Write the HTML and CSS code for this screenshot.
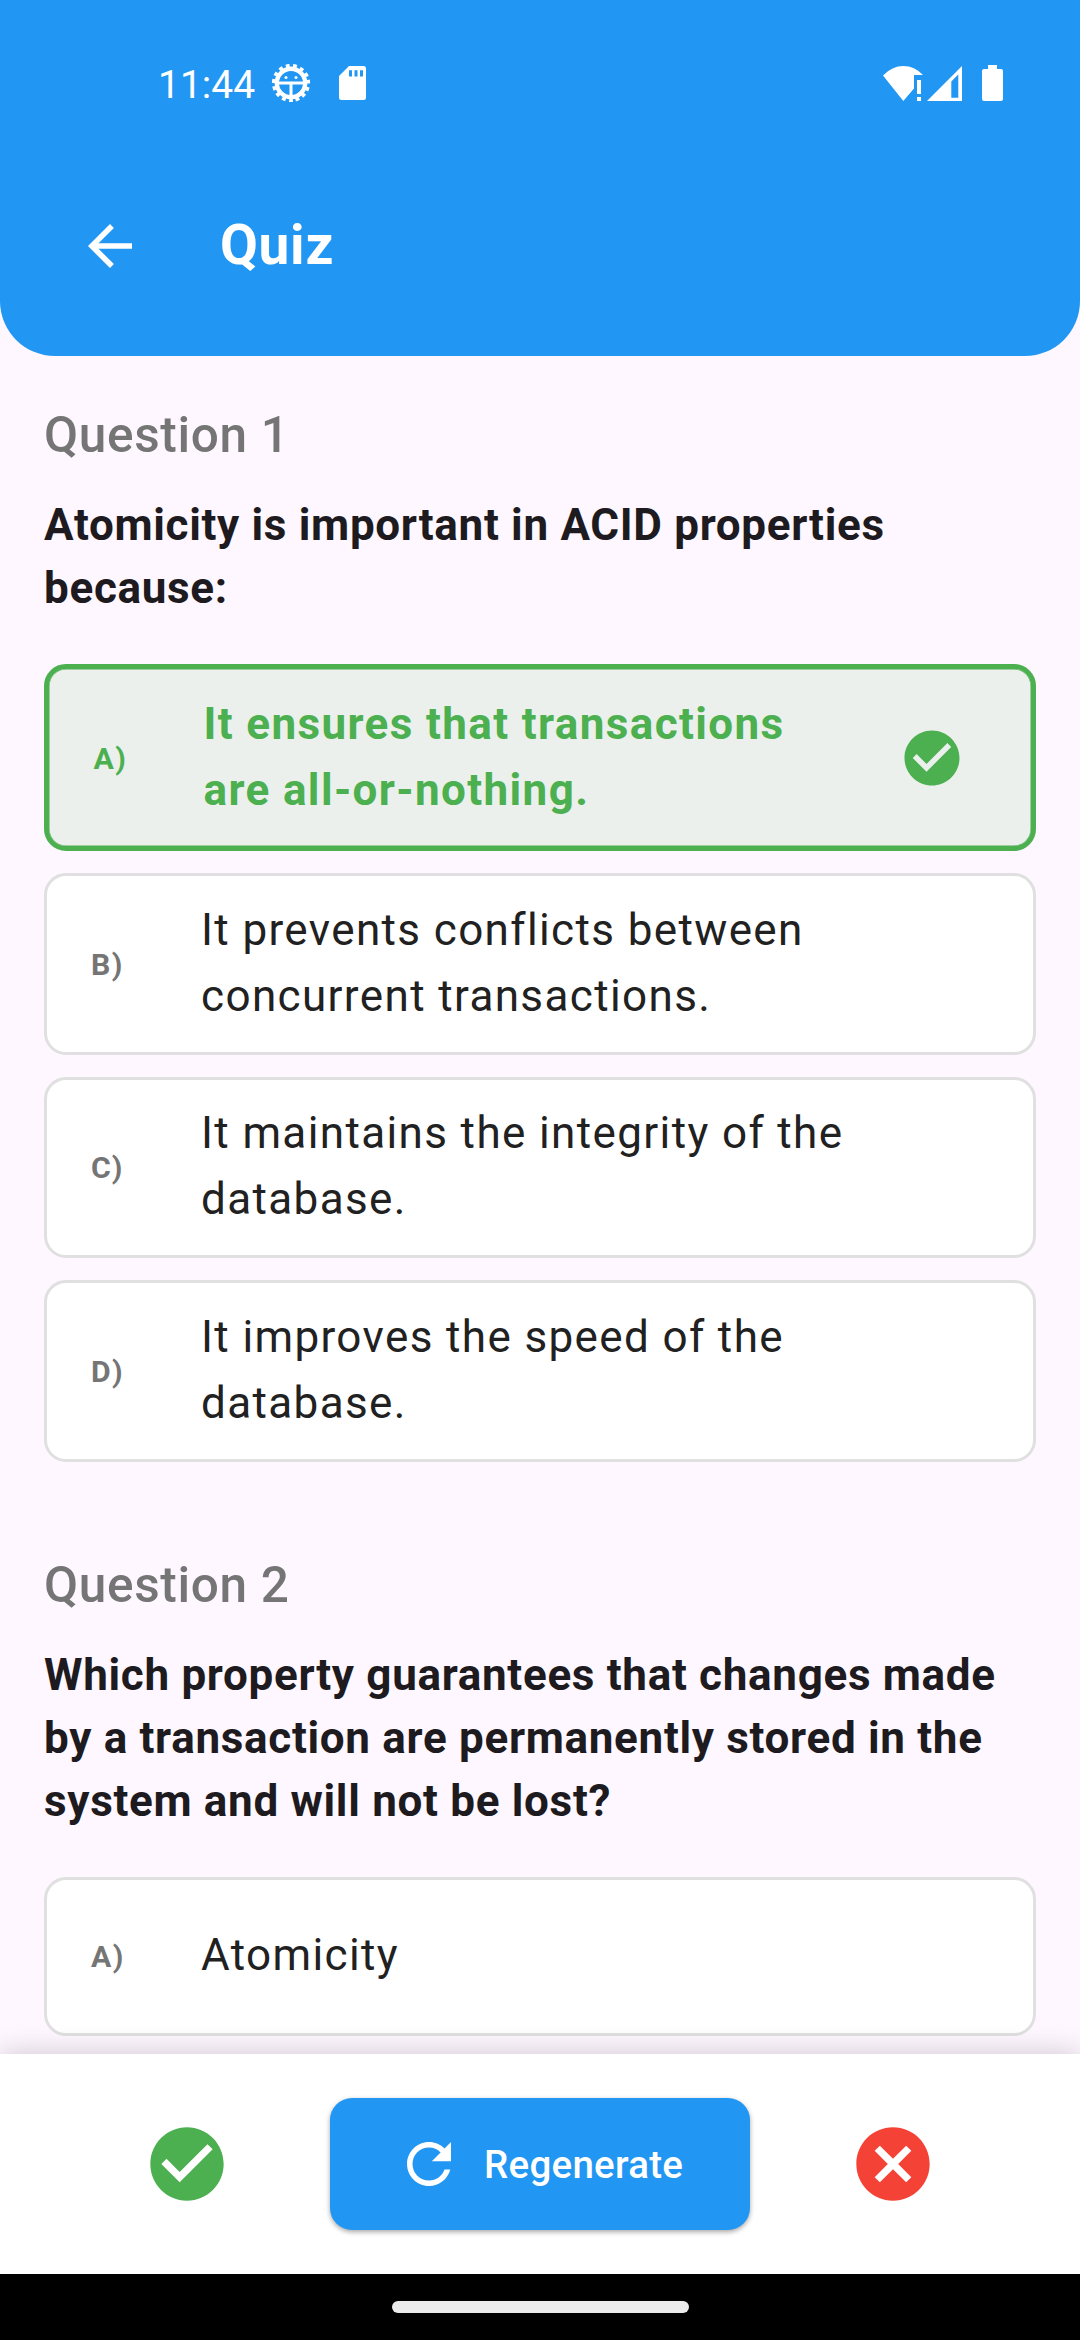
FILE: index.html
```html
<!DOCTYPE html>
<html lang="en">
<head>
<meta charset="utf-8">
<title>Quiz</title>
<link rel="stylesheet" href="styles.css">
</head>
<body>
<div class="screen">
  <header class="header">
    <div class="status">
      <span class="clock">11:44</span>
      <svg class="bug" viewBox="0 0 40 40">
        <g fill="none" stroke="#fff">
          <circle cx="20" cy="20" r="14.200" stroke-width="4.400"/>
          <circle cx="20" cy="20" r="17.200" stroke-width="3.800" stroke-dasharray="3.800 3.405" transform="rotate(83.700 20 20)"/>
          <path d="M7 20h26M20 20V33" stroke-width="3"/>
        </g>
        <circle cx="15" cy="14.500" r="1.500" fill="#fff"/><circle cx="25" cy="14.500" r="1.500" fill="#fff"/>
      </svg>
      <svg class="sd" viewBox="0 0 27 34"><path fill="#fff" fill-rule="evenodd" d="M10 0H24.500Q27 0 27 2.500V31.500Q27 34 24.500 34H2.500Q0 34 0 31.500V10ZM10 4.200V10.500H13V4.200ZM15.500 4.200V10.500H18.500V4.200ZM21 4.200V10.500H24V4.200Z"/></svg>
      <span class="spacer"></span>
      <svg class="wifi" viewBox="0 0 40 35"><path fill="#fff" d="M0 9.500Q9 0 20.300 0T40 9H31V22.500L20.300 35ZM34 14h4v14h-4ZM34 31h4v4h-4Z"/></svg>
      <svg class="signal" viewBox="0 0 35 35"><path fill="#fff" fill-rule="evenodd" d="M0 35 35 0V35ZM24.300 15.500V31.700H31.300V8.600Z"/></svg>
      <svg class="battery" viewBox="0 0 21 36"><path fill="#fff" d="M6 0h9v4h4q2 0 2 2v28q0 2-2 2H2q-2 0-2-2V6q0-2 2-2h4Z"/></svg>
    </div>
    <div class="appbar">
      <svg class="back" viewBox="0 0 24 24"><path fill="#fff" d="M20 11H7.830l5.590-5.590L12 4l-8 8 8 8 1.410-1.410L7.830 13H20v-2z"/></svg>
      <h1 class="title">Quiz</h1>
    </div>
  </header>

  <main class="content">
    <section class="question">
      <h2 class="label">Question 1</h2>
      <p class="prompt">Atomicity is important in ACID properties<br>because:</p>
      <div class="options">
        <div class="option correct">
          <span class="letter">A)</span>
          <span class="answer">It ensures that transactions<br>are all-or-nothing.</span>
          <svg class="mark" viewBox="0 0 24 24"><path fill="#4caf50" d="M12 2C6.480 2 2 6.480 2 12s4.480 10 10 10 10-4.480 10-10S17.520 2 12 2zm-2 15l-5-5 1.410-1.410L10 14.170l7.590-7.590L19 8l-9 9z"/></svg>
        </div>
        <div class="option"><span class="letter">B)</span><span class="answer">It prevents conflicts between<br>concurrent transactions.</span></div>
        <div class="option"><span class="letter">C)</span><span class="answer">It maintains the integrity of the<br>database.</span></div>
        <div class="option"><span class="letter">D)</span><span class="answer">It improves the speed of the<br>database.</span></div>
      </div>
    </section>
    <section class="question">
      <h2 class="label">Question 2</h2>
      <p class="prompt">Which property guarantees that changes made<br>by a transaction are permanently stored in the<br>system and will not be lost?</p>
      <div class="options">
        <div class="option single"><span class="letter">A)</span><span class="answer">Atomicity</span></div>
      </div>
    </section>
  </main>

  <footer class="actions">
    <svg class="action" viewBox="0 0 24 24"><path fill="#4caf50" d="M12 2C6.480 2 2 6.480 2 12s4.480 10 10 10 10-4.480 10-10S17.520 2 12 2zm-2 15l-5-5 1.410-1.410L10 14.170l7.590-7.590L19 8l-9 9z"/></svg>
    <button class="regenerate">
      <svg class="refresh" viewBox="0 0 24 24"><path fill="#fff" d="M17.650 6.350C16.200 4.900 14.210 4 12 4c-4.420 0-7.990 3.580-7.990 8s3.570 8 7.990 8c3.730 0 6.840-2.550 7.730-6h-2.080c-.82 2.330-3.040 4-5.650 4-3.310 0-6-2.690-6-6s2.690-6 6-6c1.660 0 3.140.69 4.220 1.780L13 11h7V4l-2.350 2.350z"/></svg>
      <span>Regenerate</span>
    </button>
    <svg class="action" viewBox="0 0 24 24"><path fill="#f44336" d="M12 2C6.470 2 2 6.470 2 12s4.470 10 10 10 10-4.470 10-10S17.530 2 12 2zm5 13.590L15.590 17 12 13.410 8.410 17 7 15.590 10.590 12 7 8.410 8.410 7 12 10.590 15.590 7 17 8.410 13.410 12 17 15.590z"/></svg>
  </footer>
  <div class="navbar"><div class="handle"></div></div>
</div>
</body>
</html>
```
FILE: styles.css
```css
* { box-sizing: border-box; }
body { margin: 0; font-family: Roboto, "Liberation Sans", sans-serif; }
svg { display: block; flex: none; }
.screen {
  width: 1080px;
  height: 2340px;
  display: flex;
  flex-direction: column;
  overflow: hidden;
  background: #fef7ff;
}
.header {
  flex: none;
  height: 356px;
  background: #2196f3;
  border-radius: 0 0 55px 55px;
  color: #fff;
}
.status {
  display: flex;
  align-items: center;
  height: 166px;
  padding: 0 77px 0 158px;
}
.clock { font-size: 39px; line-height: 46px; width: 113px; padding-top: 3px; white-space: nowrap; }
.bug { width: 40px; height: 40px; }
.sd { width: 27px; height: 34px; margin-left: 28px; }
.spacer { flex: 1; }
.wifi { width: 40px; height: 35px; }
.signal { width: 35px; height: 35px; margin: 0 20px 0 4px; }
.battery { width: 21px; height: 36px; }
.appbar {
  display: flex;
  align-items: center;
  height: 160px;
  padding-left: 77px;
}
.back { width: 66px; height: 66px; }
.title { margin: 0 0 0 77px; padding-bottom: 2px; font-size: 55px; line-height: 64px; font-weight: 700; letter-spacing: 0.7px; }

.content {
  flex: 1;
  min-height: 0;
  overflow: hidden;
  padding: 44px 44px 0;
  display: flex;
  flex-direction: column;
  gap: 88px;
}
.label {
  margin: 0 0 23px;
  font-size: 49.5px;
  line-height: 71px;
  font-weight: 500;
  letter-spacing: 0.6875px;
  color: #757575;
}
.prompt {
  margin: 0 0 44px;
  font-size: 44px;
  line-height: 63px;
  font-weight: 700;
  letter-spacing: 0.6875px;
  color: #1d1b20;
  white-space: nowrap;
}
.options { display: flex; flex-direction: column; gap: 22px; }
.option {
  display: flex;
  align-items: center;
  height: 181.5px;
  padding: 0 66px 0 44px;
  border: 3px solid #e0e0e0;
  border-radius: 22px;
  background: #fff;
  color: #212121;
}
.option.single { height: 159px; }
.letter {
  width: 110px;
  padding-top: 2px;
  font-size: 30.25px;
  line-height: 44px;
  font-weight: 700;
  letter-spacing: 1.375px;
  color: #757575;
}
.answer {
  flex: 1;
  padding-bottom: 2px;
  font-size: 44px;
  line-height: 66px;
  letter-spacing: 1.375px;
  white-space: nowrap;
}
.option.correct {
  height: 187px;
  padding: 0 66px 0 44.5px;
  border: 5px solid #4caf50;
  box-shadow: inset 0 0 0 0.5px #4caf50;
  background: #ebf0ec;
  color: #4caf50;
}
.correct .letter { color: #4caf50; }
.correct .answer { font-weight: 700; }
.mark { width: 66px; height: 66px; }

.actions {
  flex: none;
  height: 220px;
  display: flex;
  align-items: center;
  justify-content: space-between;
  padding: 0 143px;
  background: #fff;
  box-shadow: 0 0 28px rgba(0, 0, 0, 0.2);
}
.action { width: 88px; height: 88px; }
.regenerate {
  display: flex;
  align-items: center;
  justify-content: flex-start;
  gap: 22px;
  width: 420px;
  height: 132px;
  padding: 0 66px;
  border: 0;
  border-radius: 22px;
  background: #2196f3;
  color: #fff;
  font: 500 38.5px/55px Roboto, "Liberation Sans", sans-serif;
  letter-spacing: 0.275px;
  box-shadow: 0 2px 5px rgba(0, 0, 0, 0.35);
}
.refresh { width: 66px; height: 66px; }
.navbar {
  flex: none;
  height: 66px;
  display: flex;
  align-items: center;
  justify-content: center;
  background: #000;
  position: relative;
}
.handle { width: 297px; height: 12px; border-radius: 6px; background: #ececec; }
```
